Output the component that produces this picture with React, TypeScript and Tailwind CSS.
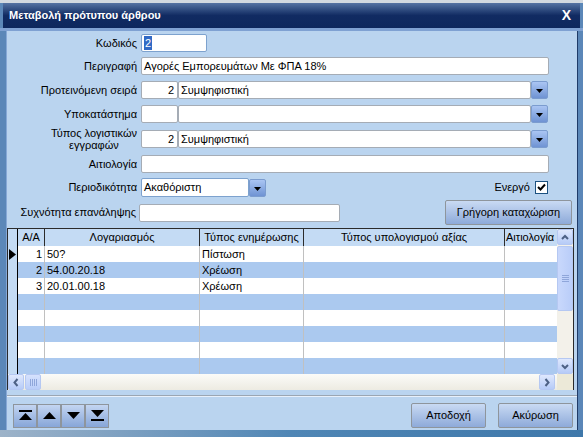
import React from 'react';

// Παράθυρο "Μεταβολή πρότυπου άρθρου" σε στυλ Windows XP
const FONT = "font-['Liberation_Sans',Arial,sans-serif]";

function DropBtn() {
  return (
    <div className="w-[17px] h-[18px] shrink-0 border border-[#7b9ccf] rounded-[2px] bg-linear-to-b from-[#aac5f3] to-[#6f93d3] flex items-center justify-center">
      <svg width="7" height="4" viewBox="0 0 7 4" className="mt-[2px]">
        <path d="M0 0h7L3.5 4z" fill="#000" />
      </svg>
    </div>
  );
}

function Input({ w, children, focus }: { w: number; children?: React.ReactNode; focus?: boolean }) {
  return (
    <div
      style={{ width: w }}
      className={`h-[18px] shrink-0 bg-white border rounded-[2px] flex items-center px-[2px] overflow-hidden whitespace-nowrap ${
        focus ? 'border-[#7da2ce]' : 'border-[#a5acb5]'
      }`}
    >
      {children}
    </div>
  );
}

function Label({ children }: { children: React.ReactNode }) {
  return <div className="w-[134px] shrink-0 pr-[4px] text-right whitespace-nowrap">{children}</div>;
}

function Combo2({ num, text }: { num?: string; text?: string }) {
  return (
    <div className="flex items-center">
      <div className="w-[37px] h-[18px] bg-white border border-[#a5acb5] rounded-[2px] text-right pr-[3px] leading-[16px]">
        {num}
      </div>
      <div className="w-[353px] h-[18px] bg-white border border-[#a5acb5] rounded-[2px] pl-[2px] leading-[16px]">
        {text}
      </div>
      <DropBtn />
    </div>
  );
}

function XpButton({ w, children }: { w: number; children: React.ReactNode }) {
  return (
    <div
      style={{ width: w }}
      className="h-[25px] border border-[#8e959c] rounded-[2px] bg-linear-to-b from-[#c9daf3] to-[#8eaad9] flex items-center justify-center"
    >
      {children}
    </div>
  );
}

function NavBtn({ kind }: { kind: number }) {
  return (
    <div className="w-[24px] h-[24px] border border-[#8e959c] bg-linear-to-b from-[#c3d5f1] to-[#87a6d8] flex items-center justify-center">
      <svg width="13" height="11" viewBox="0 0 13 11">
        {kind === 0 && (
          <>
            <rect x="0" y="0" width="13" height="2" fill="#000" />
            <path d="M0 10L6.5 3L13 10z" fill="#000" />
          </>
        )}
        {kind === 1 && <path d="M0 9L6.5 2L13 9z" fill="#000" />}
        {kind === 2 && <path d="M0 2L6.5 9L13 2z" fill="#000" />}
        {kind === 3 && (
          <>
            <path d="M0 0L6.5 7L13 0z" fill="#000" />
            <rect x="0" y="9" width="13" height="2" fill="#000" />
          </>
        )}
      </svg>
    </div>
  );
}

function ScrollBtn({ dir }: { dir: 'up' | 'down' | 'left' | 'right' }) {
  const paths: Record<string, string> = {
    up: 'M2 7L5 4L8 7',
    down: 'M2 4L5 7L8 4',
    left: 'M6.5 2L3.5 5.5L6.5 9',
    right: 'M3.5 2L6.5 5.5L3.5 9',
  };
  return (
    <div className="w-[16px] h-[16px] shrink-0 border border-[#b5c8f2] rounded-[2px] bg-linear-to-b from-[#dfe8fd] to-[#b6cbf7] flex items-center justify-center">
      <svg width="10" height="11" viewBox="0 0 10 11">
        <path d={paths[dir]} stroke="#4d6185" strokeWidth="2" fill="none" />
      </svg>
    </div>
  );
}

const COLS = [
  { w: 27, title: 'A/A' },
  { w: 155, title: 'Λογαριασμός' },
  { w: 104, title: 'Τύπος ενημέρωσης' },
  { w: 201, title: 'Τύπος υπολογισμού αξίας' },
  { w: 52, title: 'Αιτιολογία' },
];

const ROWS = [
  { n: '1', acc: '50?', type: 'Πίστωση' },
  { n: '2', acc: '54.00.20.18', type: 'Χρέωση' },
  { n: '3', acc: '20.01.00.18', type: 'Χρέωση' },
  { n: '', acc: '', type: '' },
  { n: '', acc: '', type: '' },
  { n: '', acc: '', type: '' },
  { n: '', acc: '', type: '' },
  { n: '', acc: '', type: '' },
];

export default function App() {
  return (
    <div className={`w-[583px] h-[437px] overflow-hidden bg-[#cfd6de] text-[11px] text-black ${FONT}`}>
      <div className="h-[3px] bg-[#d3d9e0]" />
      <div className="h-[434px] flex flex-col bg-[#5b87b8]">
        {/* τίτλος */}
        <div className="h-[25px] ml-[3px] mr-[3px] bg-linear-to-b from-[#5673a3] via-[#112b62] to-[#0d275d] flex items-center justify-between pl-[6px] pr-[9px]">
          <span className="text-white font-bold text-[11px]">Μεταβολή πρότυπου άρθρου</span>
          <span className="text-white font-bold text-[14px]">X</span>
        </div>
        <div className="h-[3px] bg-[#7fa1d2]" />

        <div className="flex flex-1">
          <div className="w-[6px] bg-[#5b87b8]" />
          <div className="w-[1px] bg-[#86a8d6]" />
          {/* κύριο σώμα */}
          <div className="w-[570px] bg-[#bad4ef] flex flex-col">
            <div className="flex items-center mt-[3px]">
              <Label>Κωδικός</Label>
              <Input w={66} focus>
                <span className="bg-[#316ac5] text-white leading-[14px] px-[1px]">2</span>
              </Input>
            </div>
            <div className="flex items-center mt-[5px]">
              <Label>Περιγραφή</Label>
              <Input w={408}>Αγορές Εμπορευμάτων Με ΦΠΑ 18%</Input>
            </div>
            <div className="flex items-center mt-[6px]">
              <Label>Προτεινόμενη σειρά</Label>
              <Combo2 num="2" text="Συμψηφιστική" />
            </div>
            <div className="flex items-center mt-[6px]">
              <Label>Υποκατάστημα</Label>
              <Combo2 />
            </div>
            <div className="flex items-center mt-[7px] h-[18px]">
              <div className="w-[134px] shrink-0 pr-[4px] flex justify-end">
                <div className="text-center leading-[12px]">
                  Τύπος λογιστικών
                  <br />
                  εγγραφών
                </div>
              </div>
              <Combo2 num="2" text="Συμψηφιστική" />
            </div>
            <div className="flex items-center mt-[7px]">
              <Label>Αιτιολογία</Label>
              <Input w={408} />
            </div>
            <div className="flex items-center mt-[5px] h-[19px]">
              <Label>Περιοδικότητα</Label>
              <div className="flex items-center">
                <div className="w-[108px] h-[19px] bg-white border border-[#7da2ce] rounded-[2px] pl-[2px] leading-[17px]">
                  Ακαθόριστη
                </div>
                <DropBtn />
              </div>
              <div className="ml-auto mr-[29px] flex items-center gap-[5px]">
                <span>Ενεργό</span>
                <div className="w-[13px] h-[13px] bg-white border border-[#1c5180] flex items-center justify-center">
                  <svg width="9" height="9" viewBox="0 0 9 9">
                    <path d="M1 4L3.5 6.5L8 1.5" stroke="#000" strokeWidth="2" fill="none" />
                  </svg>
                </div>
              </div>
            </div>
            <div className="flex items-center mt-[3px]">
              <div className="w-[132px] shrink-0 pr-[3px] text-right whitespace-nowrap">Συχνότητα επανάληψης</div>
              <Input w={201} />
              <div className="ml-auto mr-[5px]">
                <XpButton w={127}>Γρήγορη καταχώριση</XpButton>
              </div>
            </div>

            {/* πίνακας */}
            <div className="mt-[3px] w-[567px] h-[162px] border border-[#2b2b2b] flex flex-col bg-white">
              <div className="flex h-[145px]">
                <div className="w-[549px] flex flex-col overflow-hidden">
                  <div className="flex h-[17px] bg-[#c4dbf4]">
                    <div className="w-[10px] shrink-0 border-r border-black" />
                    {COLS.map((c, i) => (
                      <div
                        key={c.title}
                        style={{ width: c.w }}
                        className={`shrink-0 whitespace-nowrap overflow-hidden leading-[17px] ${
                          i < COLS.length - 1 ? 'text-center border-r border-[#2b2b2b]' : 'text-left pl-[1px]'
                        }`}
                      >
                        {c.title}
                      </div>
                    ))}
                  </div>
                  {ROWS.map((r, ri) => (
                    <div key={ri} className={`flex h-[16px] shrink-0 ${ri % 2 ? 'bg-[#abc9ef]' : 'bg-white'}`}>
                      <div className="w-[10px] shrink-0 border-r border-black bg-[#c4dbf4] flex items-center">
                        {ri === 0 && (
                          <svg width="7" height="11" viewBox="0 0 7 11" className="ml-[1px]">
                            <path d="M0 0L7 5.5L0 11z" fill="#000" />
                          </svg>
                        )}
                      </div>
                      <div className="w-[27px] shrink-0 border-r border-[#c0c0c0] text-right pr-[2px] leading-[16px]">{r.n}</div>
                      <div className="w-[155px] shrink-0 border-r border-[#c0c0c0] pl-[2px] leading-[16px]">{r.acc}</div>
                      <div className="w-[104px] shrink-0 border-r border-[#c0c0c0] pl-[2px] leading-[16px]">{r.type}</div>
                      <div className="w-[201px] shrink-0 border-r border-[#c0c0c0]" />
                      <div className="flex-1" />
                    </div>
                  ))}
                </div>
                {/* κάθετη μπάρα κύλισης */}
                <div className="w-[16px] bg-[#f3f1ea] flex flex-col">
                  <ScrollBtn dir="up" />
                  <div className="mt-[1px] h-[65px] border border-[#b5c8f2] rounded-[2px] bg-linear-to-r from-[#c9d8fc] to-[#b9cdf9] flex items-center justify-center">
                    <div className="flex flex-col gap-[1px]">
                      <div className="w-[7px] h-[1px] bg-[#8fa6da]" />
                      <div className="w-[7px] h-[1px] bg-[#8fa6da]" />
                      <div className="w-[7px] h-[1px] bg-[#8fa6da]" />
                      <div className="w-[7px] h-[1px] bg-[#8fa6da]" />
                    </div>
                  </div>
                  <div className="flex-1" />
                  <ScrollBtn dir="down" />
                </div>
              </div>
              {/* οριζόντια μπάρα κύλισης */}
              <div className="flex h-[16px] bg-linear-to-b from-[#fbfbf8] to-[#edebe2]">
                <div className="w-[549px] flex items-center">
                  <ScrollBtn dir="left" />
                  <div className="ml-[1px] w-[16px] h-[16px] border border-[#b5c8f2] rounded-[2px] bg-linear-to-b from-[#d6e2fd] to-[#b9cdf9] flex items-center justify-center gap-[1px]">
                    <div className="w-[1px] h-[7px] bg-[#8fa6da]" />
                    <div className="w-[1px] h-[7px] bg-[#8fa6da]" />
                    <div className="w-[1px] h-[7px] bg-[#8fa6da]" />
                    <div className="w-[1px] h-[7px] bg-[#8fa6da]" />
                  </div>
                  <div className="flex-1" />
                  <div className="mr-[2px]">
                    <ScrollBtn dir="right" />
                  </div>
                </div>
                <div className="w-[16px] bg-[#ece9d8]" />
              </div>
            </div>

            {/* διαχωριστικό */}
            <div className="mt-[5px] h-[1px] bg-[#9ba6b2]" />
            <div className="h-[1px] bg-[#e8f0fa]" />

            <div className="flex items-center mt-[6px] px-[6px]">
              <div className="flex">
                <NavBtn kind={0} />
                <NavBtn kind={1} />
                <NavBtn kind={2} />
                <NavBtn kind={3} />
              </div>
              <div className="ml-auto flex gap-[12px] mr-[-2px]">
                <XpButton w={75}>Αποδοχή</XpButton>
                <XpButton w={75}>Ακύρωση</XpButton>
              </div>
            </div>
          </div>
          <div className="w-[1px] bg-[#1f3b68]" />
          <div className="flex-1 bg-[#5b87b8]" />
        </div>
        <div className="h-[7px] bg-linear-to-r from-[#9db3c9] via-[#4f86b5] to-[#3f78aa]" />
      </div>
    </div>
  );
}
